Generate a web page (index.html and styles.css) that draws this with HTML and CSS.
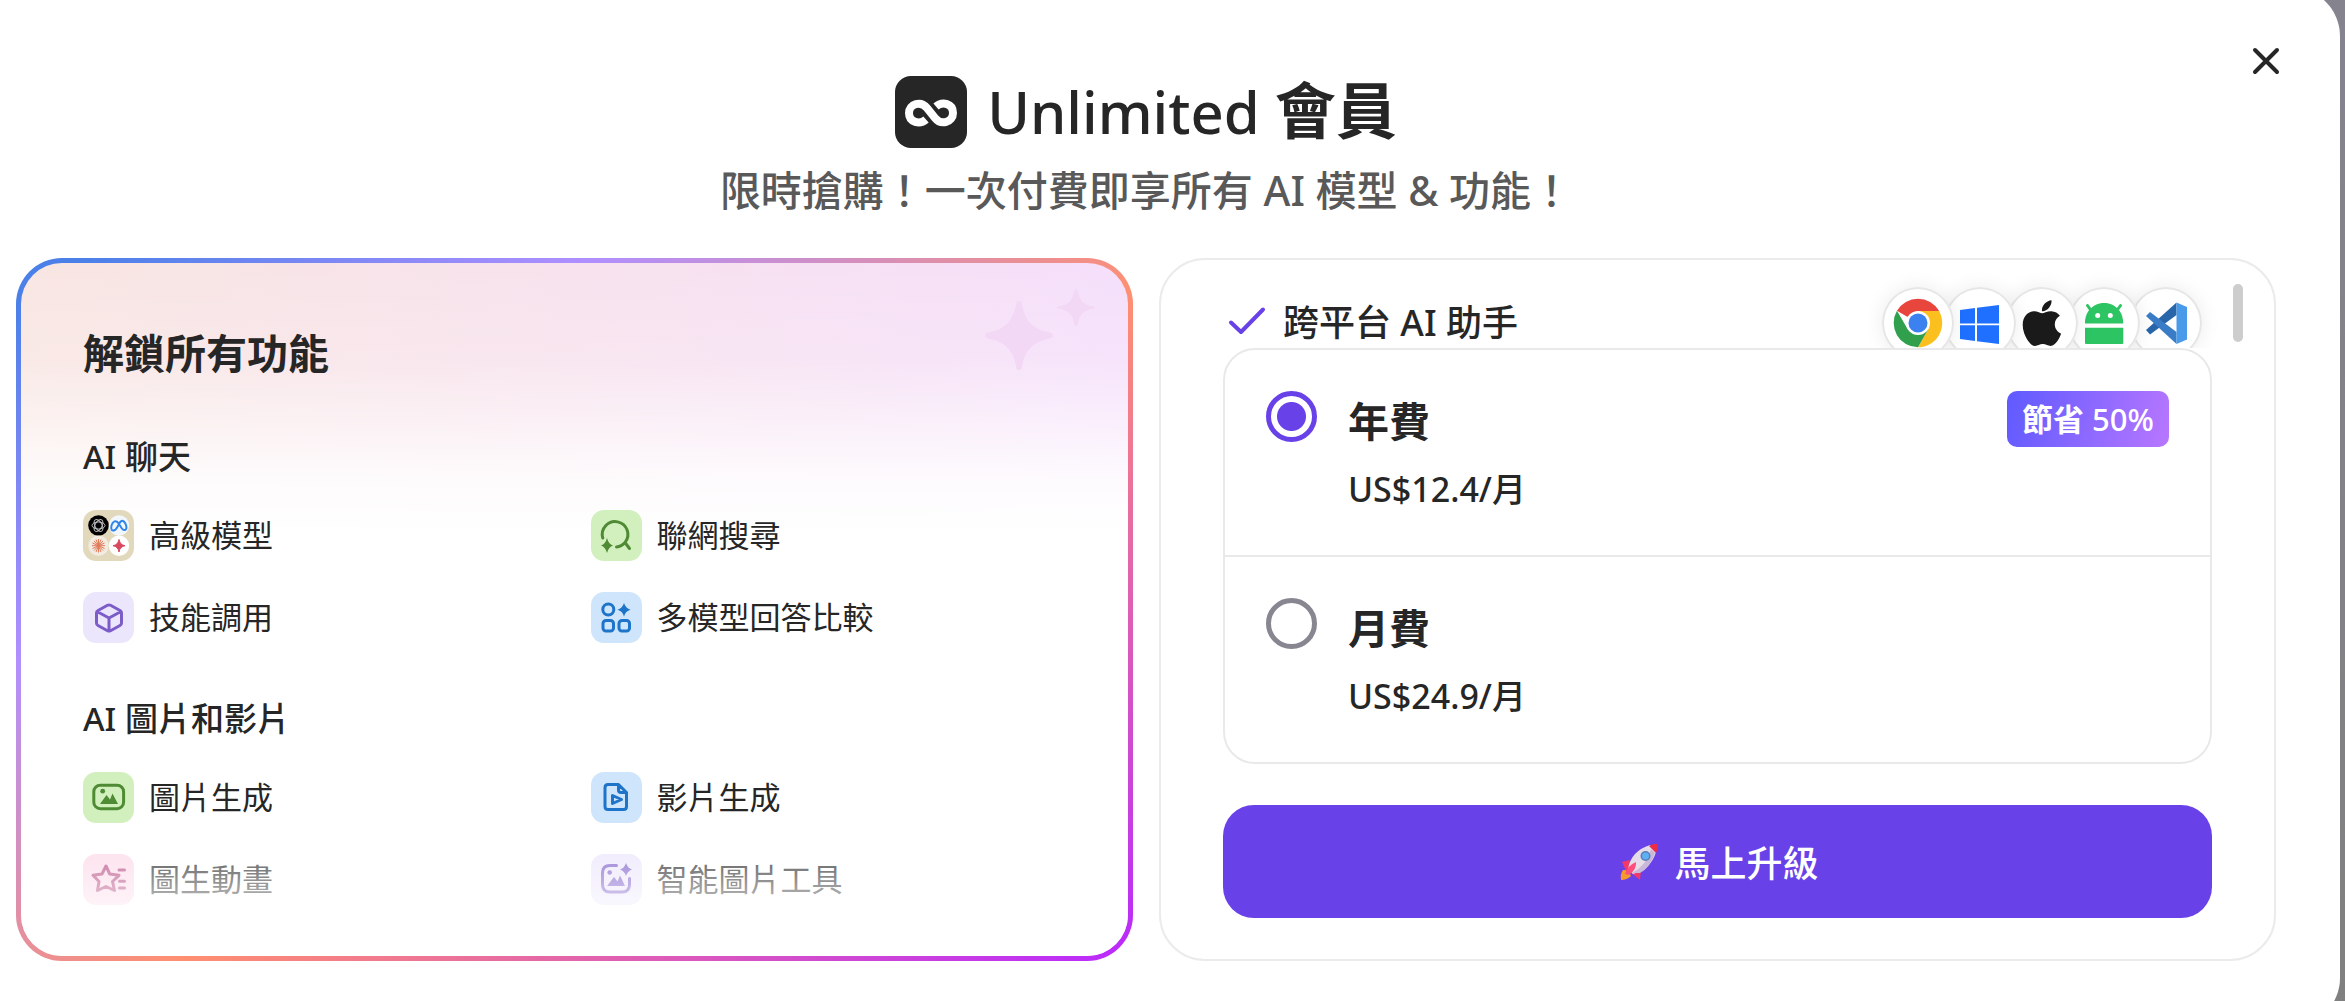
FILE: index.html
```html
<!DOCTYPE html>
<html lang="zh-Hant">

<head>
    <meta charset="UTF-8">
    <meta name="viewport" content="width=device-width, initial-scale=1.0">
    <title>Unlimited 會員</title>
    <link rel="stylesheet" href="styles.css">
</head>

<body>
    <main class="modal">
        <button class="close-button" type="button" aria-label="關閉">
            <svg viewBox="0 0 30 30"><path d="M4 4L26 26M26 4L4 26" /></svg>
        </button>

        <header class="modal-header">
            <h1 class="modal-title">
                <svg class="logo" viewBox="0 0 72 72">
                    <rect width="72" height="72" rx="16" fill="#262626" />
                    <path d="M31 43.500C25 49 14 46.500 14 37C14 27.500 26 24.500 32 32L40 42C46 49.500 58 46.500 58 37C58 27.500 47.500 25 41 30.500" fill="none" stroke="#fff" stroke-width="8" stroke-linejoin="round" />
                </svg>
                <span>Unlimited <b>會員</b></span>
            </h1>
            <p class="modal-subtitle">限時搶購！一次付費即享所有 AI 模型 &amp; 功能！</p>
        </header>

        <div class="cards">
            <section class="card-features">
                <svg class="sparkles" viewBox="0 0 111 81">
                    <path d="M35 12q3 0 3 4q4 23 26 27q5 1 5 3.500t-5 3.500q-22 4 -26 27q0 4 -3 4t-3 -4q-4 -23 -26 -27q-5 -1 -5 -3.500t5 -3.500q22 -4 26 -27q0 -4 3 -4z" />
                    <path d="M92 0q1.500 0 2 3q2 12 13 14q4 .5 4 1.500t-4 1.500q-11 2 -13 14q-.5 3 -2 3t-2 -3q-2 -12 -13 -14q-4 -.5 -4 -1.500t4 -1.500q11 -2 13 -14q.5 -3 2 -3z" />
                </svg>
                <h2 class="features-title">解鎖所有功能</h2>

                <h3 class="group-title">AI 聊天</h3>
                <ul class="feature-list">
                    <li class="feature">
                        <svg class="feature-icon beige" viewBox="0 0 51 51">
                            <circle cx="15.500" cy="15.500" r="10.300" fill="#000" />
                            <g fill="none" stroke="#bbb" stroke-width="1">
                                <ellipse cx="15.500" cy="15.500" rx="6.500" ry="3.500" />
                                <ellipse cx="15.500" cy="15.500" rx="6.500" ry="3.500" transform="rotate(60 15.500 15.500)" />
                                <ellipse cx="15.500" cy="15.500" rx="6.500" ry="3.500" transform="rotate(120 15.500 15.500)" />
                            </g>
                            <circle cx="36" cy="15.500" r="10.200" fill="#f1f7fd" />
                            <path d="M32 20c-3 1.500-4.500-.5-3.500-4.500S33 9 36 14l2.500 4c3 4 6 1.500 4.500-3S38.500 9 36 14s-2.500 5-4 6z" fill="none" stroke="#2f86e6" stroke-width="2" />
                            <circle cx="15.500" cy="35.700" r="10.200" fill="#f2ebe2" />
                            <path d="M15.500 29v13.500M9 35.700h13M11 31l9 9.500M20 31l-9 9.500M13 29.500l5 12.500M18 29.500L13 42M9.500 33l12 5.500M21.500 33l-12 5.500" stroke="#e07b58" stroke-width="1" />
                            <circle cx="36" cy="35.700" r="10.200" fill="#fff" />
                            <path d="M36 29.500q1 5.500 6 6.200q-5 .8 -6 6.300q-1 -5.500 -6 -6.300q5 -.7 6 -6.200z" fill="#d9485f" stroke="#d9485f" />
                        </svg>
                        <span>高級模型</span>
                    </li>
                    <li class="feature">
                        <svg class="feature-icon green" viewBox="0 0 51 51">
                            <path class="line" d="M11.800 28A12.800 12.800 0 1 1 34 32.500L38.500 38.500M25.500 36.900Q30.500 36.500 34 32.500" />
                            <path class="solid" d="M16 28q1.500 6 6 7.500q-4.500 1.500 -6 7.500q-1.500 -6 -6 -7.500q4.500 -1.500 6 -7.500z" />
                        </svg>
                        <span>聯網搜尋</span>
                    </li>
                    <li class="feature">
                        <svg class="feature-icon violet" viewBox="0 0 51 51">
                            <path class="line" d="M24.500 13.300Q26 12.500 27.500 13.300L37 18.500Q38.500 19.300 38.500 21V31Q38.500 32.700 37 33.500L27.500 38.700Q26 39.500 24.500 38.700L15 33.500Q13.500 32.700 13.500 31V21Q13.500 19.300 15 18.500ZM14 19.500L26 26L38 19.500M26 26V39" />
                        </svg>
                        <span>技能調用</span>
                    </li>
                    <li class="feature">
                        <svg class="feature-icon blue" viewBox="0 0 51 51">
                            <circle class="line" cx="17.300" cy="17.500" r="5.500" />
                            <rect class="line" x="12" y="28.500" width="10.500" height="10.500" rx="3" />
                            <rect class="line" x="28" y="28.500" width="10.500" height="10.500" rx="3" />
                            <path class="solid" d="M33 11q1.500 5.300 6.500 6.700q-5 1.400 -6.500 6.700q-1.500 -5.300 -6.500 -6.700q5 -1.400 6.500 -6.700z" />
                        </svg>
                        <span>多模型回答比較</span>
                    </li>
                </ul>

                <h3 class="group-title">AI 圖片和影片</h3>
                <ul class="feature-list">
                    <li class="feature">
                        <svg class="feature-icon green" viewBox="0 0 51 51">
                            <rect class="line" x="10.800" y="13.200" width="29.800" height="23.500" rx="6.500" />
                            <circle class="solid" cx="19.700" cy="19.200" r="2.400" />
                            <path class="solid" d="M17 32L23.500 23L27 27.500L29.500 21.500L35 32Z" />
                        </svg>
                        <span>圖片生成</span>
                    </li>
                    <li class="feature">
                        <svg class="feature-icon blue" viewBox="0 0 51 51">
                            <path class="line" d="M27.500 12.500H17Q14 12.500 14 15.500V34.500Q14 37.500 17 37.500H32.500Q35.500 37.500 35.500 34.500V20.500L27.500 12.500V18Q27.500 20.500 30 20.500H35.500M21.500 23.500V31.500L30.500 27.500Z" />
                        </svg>
                        <span>影片生成</span>
                    </li>
                    <li class="feature">
                        <svg class="feature-icon pink" viewBox="0 0 51 51">
                            <path class="line" d="M23 12L26.700 20L36 21.300L29.500 27.500L31.500 36.500L23 32.500L14.500 36.500L16 27.500L10 21.300L19 20ZM36 16H41.500M36.500 27.300H41.500M36.500 34H41.500" />
                        </svg>
                        <span>圖生動畫</span>
                    </li>
                    <li class="feature">
                        <svg class="feature-icon violet" viewBox="0 0 51 51">
                            <path class="line" d="M25.500 11.500H19Q11.500 11.500 11.500 19V30.500Q11.500 38 19 38H31Q38.500 38 38.500 30.500V24.500" />
                            <circle class="solid" cx="18.700" cy="18.500" r="2.300" />
                            <path class="solid" d="M16 32L23 23L26.500 27.500L29 21.500L34 32ZM35 9q1.500 5 6 6.500q-4.500 1.500 -6 6.500q-1.500 -5 -6 -6.500q4.500 -1.500 6 -6.500z" />
                        </svg>
                        <span>智能圖片工具</span>
                    </li>
                </ul>
            </section>

            <section class="card-plans">
                <div class="benefits">
                    <div class="benefit">
                        <svg class="check" viewBox="0 0 41 41"><path d="M5 19.500L15 29L37 6.500" /></svg>
                        <span>跨平台 AI 助手</span>
                        <div class="platforms">
                            <svg class="platform" viewBox="0 0 72 72">
                                <path d="M36 36L14.950 23.850A24.300 24.300 0 0 1 57.050 23.850Z" fill="#e8453c" />
                                <path d="M36 24H57.050A24.300 24.300 0 0 1 36 60.300L46.400 42Z" fill="#fcc01e" />
                                <path d="M25.600 42L14.950 23.850A24.300 24.300 0 0 0 36 60.300L46.400 42Z" fill="#31a04c" />
                                <circle cx="36" cy="36" r="12" fill="#fff" />
                                <circle cx="36" cy="36" r="9.500" fill="#3b82f0" />
                            </svg>
                            <svg class="platform" viewBox="0 0 72 72">
                                <path d="M16 23L31 21V36.500H16ZM33 20.700L55 18V36.500H33ZM16 38.200H31V54L16 52ZM33 38.200H55V57L33 54.300Z" fill="#1f70ff" />
                            </svg>
                            <svg class="platform" viewBox="0 0 72 72">
                                <path transform="translate(16.300 10) scale(.102)" fill="#1a1a1a" d="M318.700 268.700c-.2-36.700 16.400-64.400 50-84.800-18.800-26.900-47.200-41.700-84.700-44.600-35.500-2.800-74.300 20.700-88.500 20.700-15 0-49.400-19.700-76.400-19.700C63.300 141.200 4 184.800 4 273.500q0 39.300 14.400 81.200c12.800 36.700 59 126.700 107.200 125.200 25.200-.6 43-17.900 75.800-17.900 31.800 0 48.300 17.900 76.400 17.900 48.600-.7 90.400-82.500 102.600-119.300-65.200-30.700-61.700-90-61.700-91.900zm-56.600-164.200c27.300-32.400 24.800-61.900 24-72.500-24.100 1.400-52 16.400-67.900 34.900-17.500 19.800-27.800 44.300-25.600 71.900 26.100 2 49.900-11.400 69.500-34.300z" />
                            </svg>
                            <svg class="platform" viewBox="0 0 72 72">
                                <path d="M22 22L19.500 18.500M50 22L52.500 18.500" stroke="#2dc464" stroke-width="3" stroke-linecap="round" fill="none" />
                                <path d="M17 36.500C17 9 55.300 9 55.300 36.500ZM17 40.700H55.300V56Q55.300 57 54.300 57H18Q17 57 17 56Z" fill="#2dc464" />
                                <circle cx="29.700" cy="28.500" r="2.500" fill="#fff" />
                                <circle cx="42.300" cy="28.500" r="2.500" fill="#fff" />
                            </svg>
                            <svg class="platform" viewBox="0 0 72 72">
                                <path d="M46.500 15.500L16 43L20 47.500L46.500 28Z" fill="#2865a9" />
                                <path d="M46.500 57L16 29L20 25L46.500 45Z" fill="#3a7cc6" />
                                <path d="M46.500 15.500L57 20V52.500L46.500 57Z" fill="#4a9aea" />
                            </svg>
                        </div>
                    </div>
                    <div class="scroll-thumb"></div>
                </div>

                <div class="plans">
                    <label class="plan">
                        <input class="plan-radio" type="radio" name="plan" value="yearly" checked>
                        <span class="plan-info">
                            <span class="plan-name">年費</span>
                            <span class="plan-price">US$12.4/月</span>
                        </span>
                        <span class="plan-badge"><b>節省</b> 50%</span>
                    </label>
                    <label class="plan">
                        <input class="plan-radio" type="radio" name="plan" value="monthly">
                        <span class="plan-info">
                            <span class="plan-name">月費</span>
                            <span class="plan-price">US$24.9/月</span>
                        </span>
                    </label>
                </div>

                <button class="upgrade-button" type="button">
                    <svg class="rocket" viewBox="0 0 38 38">
                        <path d="M3 27Q0 31 1 37Q7 37 11 33L8 27Z" fill="#f79a2e" />
                        <path d="M2 19L9 17L14 24L6 28Z" fill="#f0386b" />
                        <path d="M20 37L21 28L14 24L10 29Z" fill="#f0386b" />
                        <path d="M8 26Q11 8 30 2L36 9Q31 26 13 31Z" fill="#e6dcea" />
                        <path d="M20 30Q30 25 35 10L31 6Q27 22 12 30Z" fill="#c9b8d8" />
                        <path d="M29 3Q35 0 37 1Q39 5 36 10Z" fill="#ec2b45" />
                        <path d="M5 31Q8 22 16 19Q17 26 9 32Z" fill="#ff4f7d" />
                        <circle cx="25.500" cy="13" r="5" fill="#5a7fb5" />
                        <circle cx="25.500" cy="13" r="3.500" fill="#5cb0f5" />
                    </svg>
                    <span>馬上升級</span>
                </button>
            </section>
        </div>
    </main>
</body>

</html>
```

FILE: styles.css
```css
* {
    box-sizing: border-box;
}

body,
html {
    margin: 0;
    padding: 0;
    height: 100%;
    overflow: hidden;
}

body {
    font-family: "Noto Sans", "Noto Sans CJK TC", sans-serif;
    color: #262626;
    background: linear-gradient(#85838e, #808080);
}

h1,
h2,
h3,
p,
ul {
    margin: 0;
    padding: 0;
}

button {
    font-family: inherit;
    border: none;
    cursor: pointer;
}

/* The dialog is taller and wider than the window and bleeds off its edges */
.modal {
    position: relative;
    margin: -12px 5px 0 -48px;
    padding: 87px 64px 65px;
    background: #fff;
    border-radius: 48px;
}

.close-button {
    position: absolute;
    top: 58px;
    right: 59px;
    width: 30px;
    height: 30px;
    padding: 0;
    background: none;
}

.close-button svg {
    display: block;
    fill: none;
    stroke: #262626;
    stroke-width: 4;
    stroke-linecap: round;
}

.modal-header {
    margin-bottom: 41px;
    text-align: center;
}

.modal-title {
    display: flex;
    justify-content: center;
    align-items: center;
    gap: 20px;
    font-size: 58px;
    font-weight: 500;
    line-height: 72px;
}

.modal-title b {
    font-size: 61px;
}

.logo {
    width: 72px;
    height: 72px;
}

.modal-subtitle {
    margin-top: 15px;
    color: #595959;
    font-size: 41px;
    font-weight: 500;
    line-height: 54px;
}

.cards {
    display: grid;
    grid-template-columns: 1fr 1fr;
    gap: 26px;
}

.card-features {
    position: relative;
    padding: 60px 62px 51px;
    border: 5px solid transparent;
    border-radius: 46px;
    background:
        linear-gradient(rgba(255, 255, 255, 0) 0%, rgba(255, 255, 255, 0.15) 14%, rgba(255, 255, 255, 0.5) 23%, rgba(255, 255, 255, 0.85) 31%, #fff 39%) padding-box,
        linear-gradient(to right, #f8e6e2, #f7e2ed 50%, #f5dffb) padding-box,
        linear-gradient(145deg, #4a80e8 3%, #b08fff 27%, #ff8f70 55%, #b928ff 100%) border-box;
}

/* Fades out the last row */
.card-features::after {
    content: "";
    position: absolute;
    left: 30px;
    right: 30px;
    bottom: 15px;
    height: 120px;
    background: linear-gradient(rgba(255, 255, 255, 0), #fff);
    pointer-events: none;
}

.sparkles {
    position: absolute;
    top: 26px;
    right: 33px;
    width: 111px;
    height: 81px;
    fill: #f2d8f5;
}

.features-title {
    margin-bottom: 47px;
    font-size: 41px;
    font-weight: 700;
    line-height: 61px;
}

.group-title {
    margin-bottom: 28px;
    font-size: 33px;
    font-weight: 500;
    line-height: 51px;
}

.feature-list {
    display: grid;
    grid-template-columns: 1fr 1fr;
    gap: 31px 32px;
    list-style: none;
}

.feature-list + .group-title {
    margin-top: 50px;
}

.feature {
    display: flex;
    align-items: center;
    gap: 15px;
    font-size: 31px;
    line-height: 51px;
}

.feature-icon {
    width: 51px;
    height: 51px;
    border-radius: 13px;
}

.line {
    fill: none;
    stroke: currentColor;
    stroke-width: 3;
    stroke-linecap: round;
    stroke-linejoin: round;
}

.solid {
    fill: currentColor;
}

.beige {
    background: #e2d8bb;
}

.green {
    color: #4f8a35;
    background: #d2f0be;
}

.violet {
    color: #7b5cc8;
    background: #ece6fc;
}

.blue {
    color: #1d74c8;
    background: #cfe5fb;
}

.pink {
    color: #b5487f;
    background: #fcd9e8;
}

.card-plans {
    display: flex;
    flex-direction: column;
    border: 2px solid #ebebeb;
    border-radius: 46px;
}

.benefits {
    position: relative;
    flex: 1 0 0;
    min-height: 0;
    padding: 27px 72px 0 65px;
    overflow: hidden;
}

.benefit {
    display: flex;
    align-items: center;
    gap: 16px;
    height: 72px;
    font-size: 36px;
    font-weight: 500;
    line-height: 46px;
}

.check {
    width: 41px;
    height: 41px;
    fill: none;
    stroke: #6841e8;
    stroke-width: 4;
    stroke-linecap: round;
    stroke-linejoin: round;
}

.platforms {
    display: flex;
    flex-direction: row;
    margin-left: auto;
}

.platform {
    position: relative;
    width: 72px;
    height: 72px;
    margin-left: -10px;
    background: #fff;
    border-radius: 50%;
    box-shadow: inset 0 0 0 2px #e6e6e6, 0 0 20px rgba(0, 0, 0, 0.08);
}

.platform:nth-child(1) {
    z-index: 5;
}

.platform:nth-child(2) {
    z-index: 4;
}

.platform:nth-child(3) {
    z-index: 3;
}

.platform:nth-child(4) {
    z-index: 2;
}

.scroll-thumb {
    position: absolute;
    top: 24px;
    right: 31px;
    width: 10px;
    height: 58px;
    background: #cdcdcd;
    border-radius: 5px;
}

.plans {
    margin: 0 62px 41px;
    border: 2px solid #e9e9e9;
    border-radius: 32px;
}

.plan {
    display: flex;
    align-items: flex-start;
    gap: 31px;
    padding: 41px 41px 36px;
    cursor: pointer;
}

.plan + .plan {
    border-top: 2px solid #e9e9e9;
}

.plan-radio {
    appearance: none;
    flex: none;
    width: 51px;
    height: 51px;
    margin: 0;
    border: 5px solid #888690;
    border-radius: 50%;
}

.plan-radio:checked {
    border-color: #6841e8;
    background: radial-gradient(circle, #6841e8 14px, transparent 15px);
}

.plan-info {
    display: flex;
    flex: 1;
    flex-direction: column;
    gap: 8px;
}

.plan-name {
    font-size: 41px;
    font-weight: 700;
    line-height: 60px;
}

.plan-price {
    font-size: 34px;
    font-weight: 500;
    line-height: 60px;
}

.plan-badge {
    padding: 0 15px;
    color: #fff;
    background: linear-gradient(105deg, #5f5aff, #b877ff);
    border-radius: 10px;
    font-size: 31px;
    font-weight: 500;
    line-height: 56px;
}

.upgrade-button {
    display: flex;
    justify-content: center;
    align-items: center;
    gap: 16px;
    height: 113px;
    margin: 0 62px 41px;
    color: #fff;
    background: #6841e8;
    border-radius: 31px;
    font-size: 36px;
    font-weight: 500;
}

.rocket {
    width: 38px;
    height: 38px;
    margin-left: 4px;
}
```
